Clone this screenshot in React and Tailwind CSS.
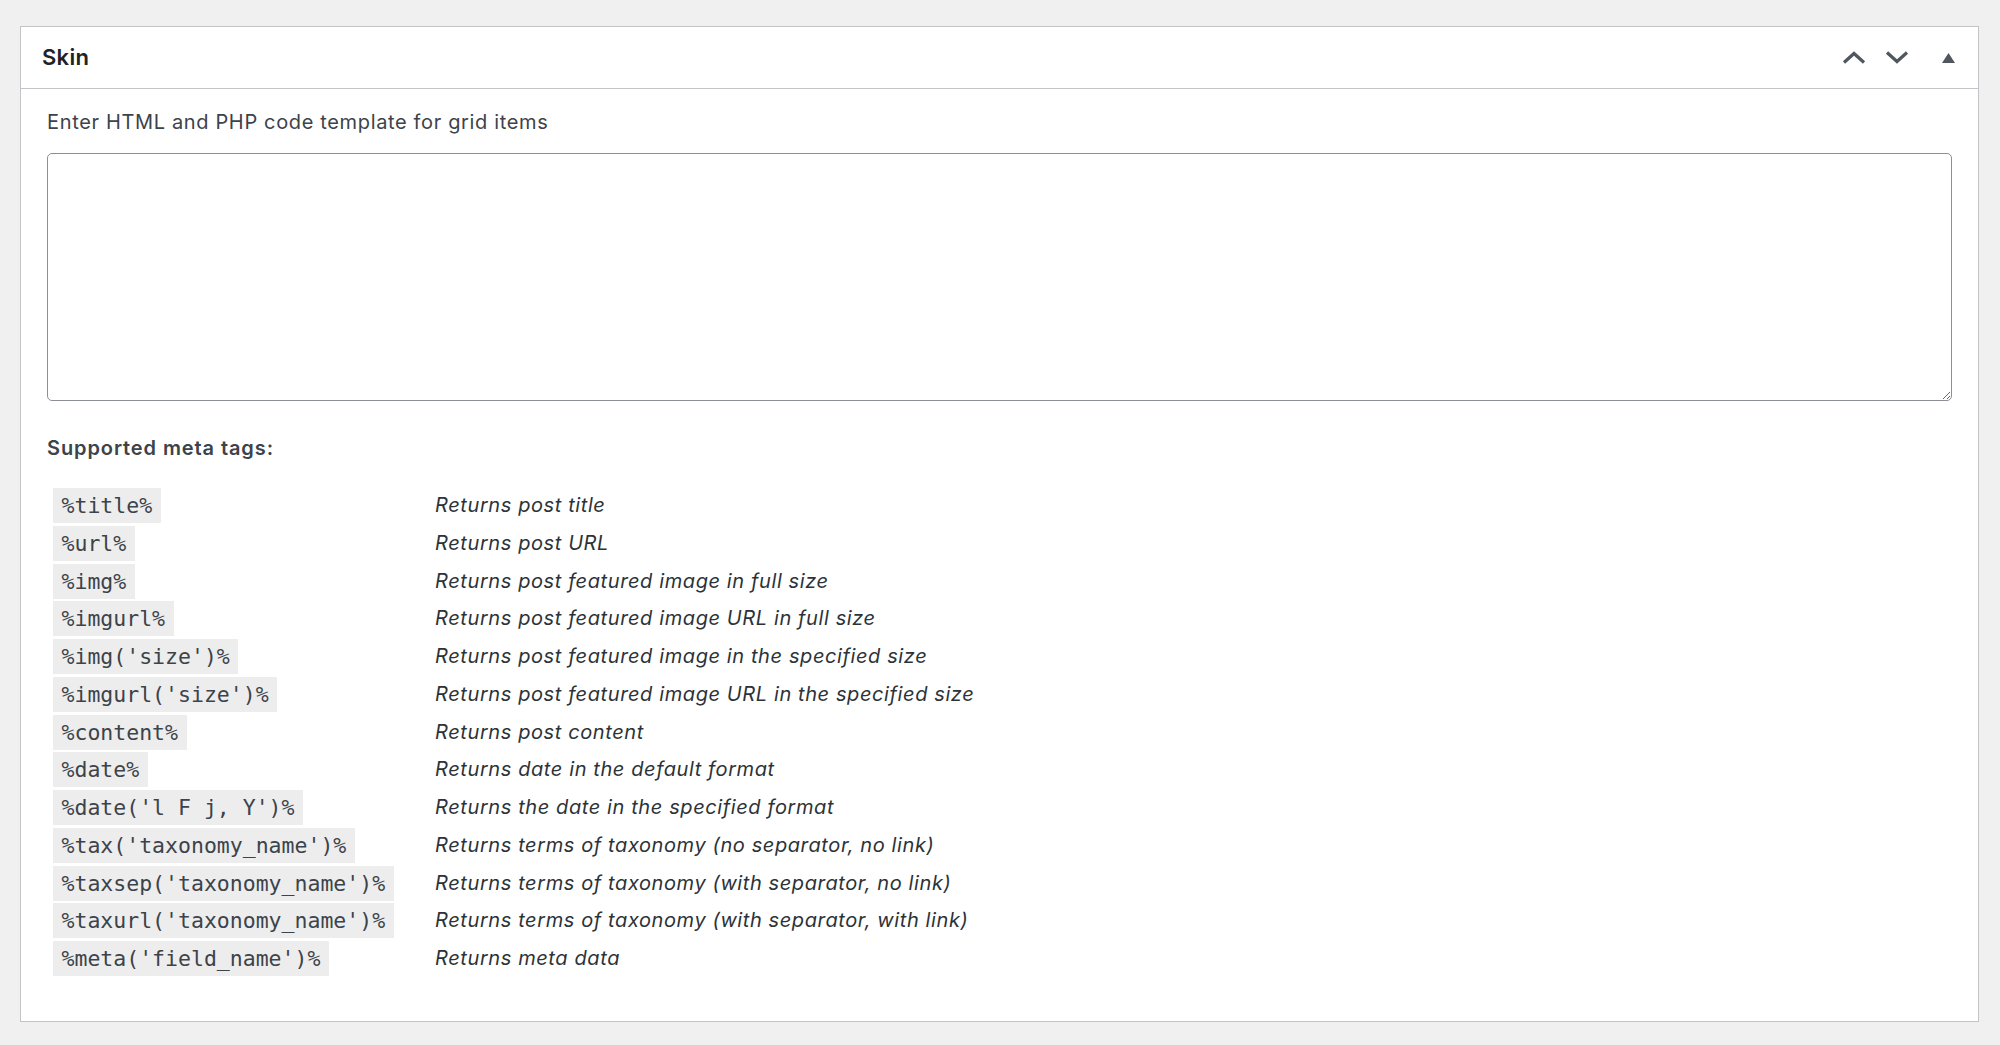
import React from "react";

const tags = [
  ["%title%", "Returns post title"],
  ["%url%", "Returns post URL"],
  ["%img%", "Returns post featured image in full size"],
  ["%imgurl%", "Returns post featured image URL in full size"],
  ["%img('size')%", "Returns post featured image in the specified size"],
  ["%imgurl('size')%", "Returns post featured image URL in the specified size"],
  ["%content%", "Returns post content"],
  ["%date%", "Returns date in the default format"],
  ["%date('l F j, Y')%", "Returns the date in the specified format"],
  ["%tax('taxonomy_name')%", "Returns terms of taxonomy (no separator, no link)"],
  ["%taxsep('taxonomy_name')%", "Returns terms of taxonomy (with separator, no link)"],
  ["%taxurl('taxonomy_name')%", "Returns terms of taxonomy (with separator, with link)"],
  ["%meta('field_name')%", "Returns meta data"],
];

const SkinBox = () => {
  return (
    <div className="min-h-screen bg-[#f0f0f1] pt-[26px] pl-[20px] pr-[21px] font-['Inter','Liberation_Sans',sans-serif]">
      <div className="h-[996px] border border-[#c3c4c7] bg-white">
        {/* header */}
        <div className="flex h-[62px] items-center border-b border-[#c3c4c7] pl-[21px] pr-[23px]">
          <h2 className="text-[22px] font-semibold tracking-[0.3px] text-[#1d2327]">Skin</h2>
          <div className="ml-auto flex items-center">
            <button type="button" className="text-[#50575e]">
              <svg width="24" height="13" viewBox="0 0 24 13" fill="none" stroke="currentColor" strokeWidth="3.2">
                <polyline points="2,11.5 12,2.5 22,11.5" />
              </svg>
            </button>
            <button type="button" className="ml-[19px] text-[#50575e]">
              <svg width="24" height="13" viewBox="0 0 24 13" fill="none" stroke="currentColor" strokeWidth="3.2">
                <polyline points="2,1.5 12,10.5 22,1.5" />
              </svg>
            </button>
            <button type="button" className="ml-[33px] text-[#50575e]">
              <svg width="13" height="10" viewBox="0 0 13 10" fill="currentColor">
                <polygon points="6.5,0 13,10 0,10" />
              </svg>
            </button>
          </div>
        </div>

        {/* body */}
        <div className="px-[26px] pt-[19px]">
          <p className="text-[20px] leading-[28px] tracking-[0.65px] text-[#3c434a]">
            Enter HTML and PHP code template for grid items
          </p>
          <textarea className="mt-[17px] block h-[248px] w-full rounded-[5px] border border-[#8c8f94] bg-white" />

          <p className="mt-[33px] text-[20px] font-semibold leading-[28px] tracking-[0.9px] text-[#3c434a]">
            Supported meta tags:
          </p>

          <div className="mt-[26px]">
            {tags.map(([tag, desc]) => (
              <div key={tag} className="flex h-[37.75px] items-start">
                <div className="w-[388px] pl-[6px]">
                  <code className="inline-block h-[35px] bg-[#ededed] px-[8.5px] font-['DejaVu_Sans_Mono',monospace] text-[21.5px] leading-[35px] text-[#3c434a]">
                    {tag}
                  </code>
                </div>
                <span className="text-[20px] italic leading-[35px] tracking-[0.6px] text-[#2c3338]">{desc}</span>
              </div>
            ))}
          </div>
        </div>
      </div>
    </div>
  );
};

export default function App() {
  return <SkinBox />;
}
